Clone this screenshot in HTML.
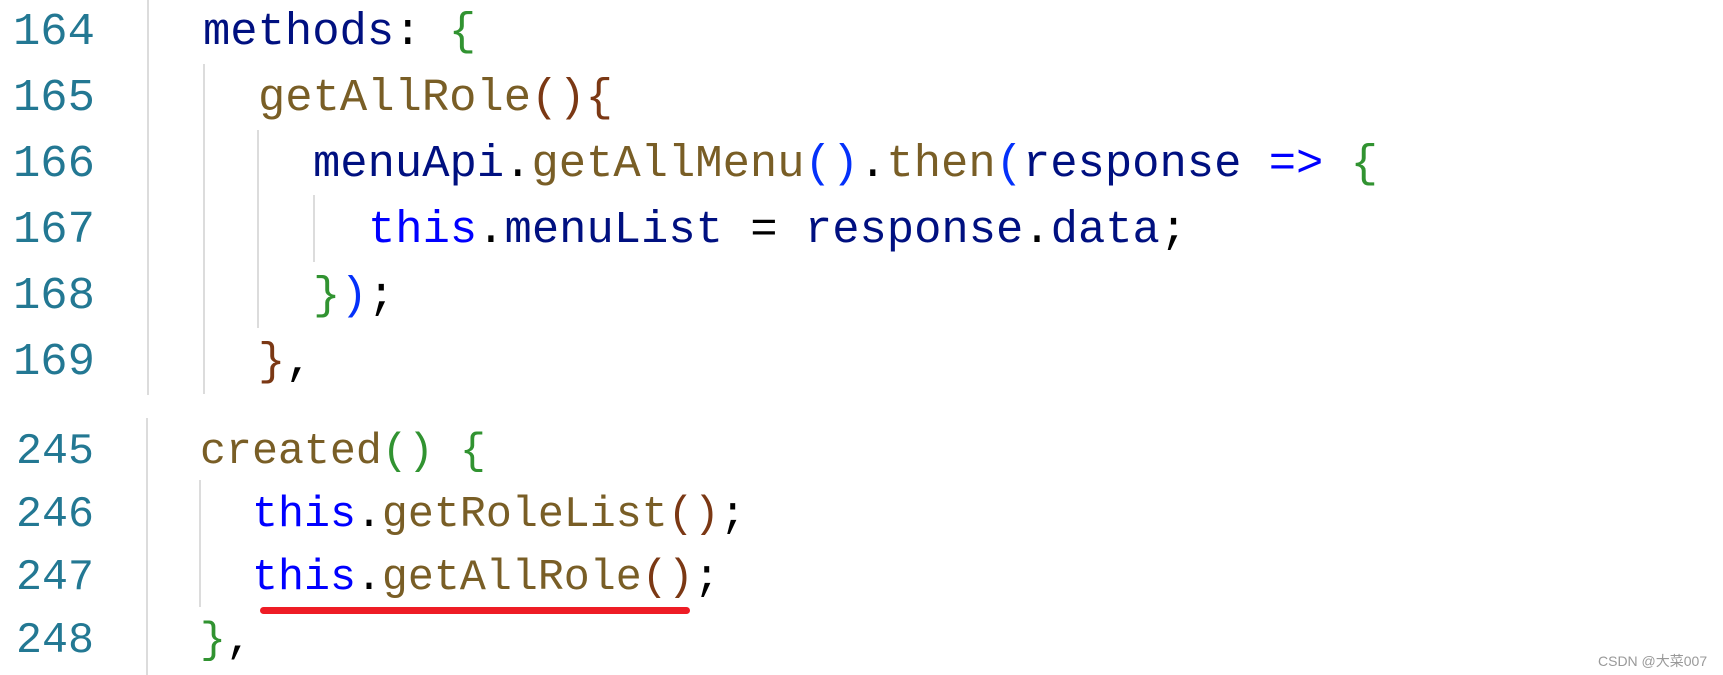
<!DOCTYPE html>
<html><head><meta charset="utf-8"><style>
html,body{margin:0;padding:0;background:#fff;width:1723px;height:675px;overflow:hidden;position:relative}
.l{position:absolute;white-space:pre;font-family:"Liberation Mono",monospace;}
.a{font-size:45.5px;line-height:66px;height:66px}
.b{font-size:43.3px;line-height:63px;height:63px}
.n{color:#237893;left:13px}
.v{color:#001080}.f{color:#795e26}.k{color:#0000ff}.g{color:#319331}.br{color:#7b3814}.bl{color:#0431fa}.p{color:#000}
.gl{position:absolute;width:2px;background:#dcdcdc}
</style></head><body>
<div class="gl" style="left:147px;top:0;height:395px"></div>
<div class="gl" style="left:146px;top:418px;height:257px"></div>
<div class="gl" style="left:203px;top:64px;height:330px"></div>
<div class="gl" style="left:257px;top:130px;height:198px"></div>
<div class="gl" style="left:313px;top:195px;height:67px"></div>
<div class="gl" style="left:199px;top:480px;height:127px"></div>

<div class="l a n" style="top:-1px">164</div>
<div class="l a n" style="top:65px">165</div>
<div class="l a n" style="top:131px">166</div>
<div class="l a n" style="top:197px">167</div>
<div class="l a n" style="top:263px">168</div>
<div class="l a n" style="top:329px">169</div>

<div class="l a" style="top:-1px;left:203px"><span class="v">methods</span><span class="p">: </span><span class="g">{</span></div>
<div class="l a" style="top:65px;left:258px"><span class="f">getAllRole</span><span class="br">(){</span></div>
<div class="l a" style="top:131px;left:313px"><span class="v">menuApi</span><span class="p">.</span><span class="f">getAllMenu</span><span class="bl">()</span><span class="p">.</span><span class="f">then</span><span class="bl">(</span><span class="v">response</span> <span class="k">=&gt;</span> <span class="g">{</span></div>
<div class="l a" style="top:197px;left:368px"><span class="k">this</span><span class="p">.</span><span class="v">menuList</span><span class="p"> = </span><span class="v">response</span><span class="p">.</span><span class="v">data</span><span class="p">;</span></div>
<div class="l a" style="top:263px;left:313px"><span class="g">}</span><span class="bl">)</span><span class="p">;</span></div>
<div class="l a" style="top:329px;left:258px"><span class="br">}</span><span class="p">,</span></div>

<div class="l b n" style="top:421px;left:16px">245</div>
<div class="l b n" style="top:484px;left:16px">246</div>
<div class="l b n" style="top:547px;left:16px">247</div>
<div class="l b n" style="top:610px;left:16px">248</div>

<div class="l b" style="top:421px;left:200px"><span class="f">created</span><span class="g">()</span> <span class="g">{</span></div>
<div class="l b" style="top:484px;left:252px"><span class="k">this</span><span class="p">.</span><span class="f">getRoleList</span><span class="br">()</span><span class="p">;</span></div>
<div class="l b" style="top:547px;left:252px"><span class="k">this</span><span class="p">.</span><span class="f">getAllRole</span><span class="br">()</span><span class="p">;</span></div>
<div class="l b" style="top:610px;left:200px"><span class="g">}</span><span class="p">,</span></div>

<div style="position:absolute;left:260px;top:607px;width:430px;height:7px;background:#ee1c25;border-radius:4px"></div>

<div style="position:absolute;left:1598px;top:651px;font-family:'Liberation Sans','Noto Sans CJK SC',sans-serif;font-size:14px;color:#999">CSDN @大菜007</div>
</body></html>
